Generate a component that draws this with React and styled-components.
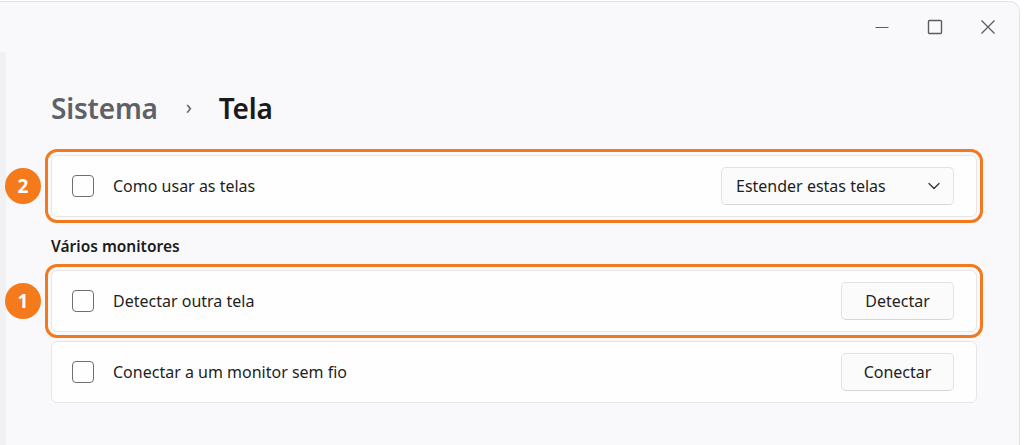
import React from 'react'
import styled, { createGlobalStyle } from 'styled-components'

const GlobalStyle = createGlobalStyle`
    html, body {
        margin: 0;
        padding: 0;
        background: #ffffff;
    }
    body {
        font-family: "Noto Sans", "Open Sans", sans-serif;
        color: #1b1b1b;
    }
`

const Window = styled.div`
    width: 1020px;
    height: 445px;
    box-sizing: border-box;
    margin-top: 1px;
    background: #f9f9fb;
    border-top: 1px solid #e4e4e8;
    border-right: 1px solid #e4e4e8;
    border-top-right-radius: 10px;
    display: flex;
    flex-direction: column;
    overflow: hidden;
`

const TitleBar = styled.div`
    height: 50px;
    display: flex;
    justify-content: flex-end;
    align-items: center;
    padding-right: 5px;
    flex-shrink: 0;
`

const WinButton = styled.div`
    width: 53px;
    height: 36px;
    display: flex;
    align-items: center;
    justify-content: center;
    color: #5c5c60;
`

const Body = styled.div`
    flex: 1;
    display: flex;
`

const Rail = styled.div`
    width: 6px;
    background: #f1f1f3;
    flex-shrink: 0;
`

const Main = styled.main`
    flex: 1;
    padding: 36px 42px 0 45px;
    display: flex;
    flex-direction: column;
`

const Breadcrumb = styled.h1`
    margin: 0;
    height: 40px;
    display: flex;
    align-items: center;
    font-size: 28px;
    font-weight: 600;
    letter-spacing: -0.2px;
`

const Crumb = styled.span`
    color: ${props => props.current ? '#1a1a1a' : '#606066'};
`

const Chevron = styled.span`
    color: #606066;
    font-size: 20px;
    font-weight: 400;
    margin: 0 27px 4px 28px;
`

const Section = styled.h2`
    margin: 19px 0 14px;
    height: 20px;
    line-height: 20px;
    font-size: 15.5px;
    font-weight: 600;
    color: #1c1c1c;
`

const Card = styled.div`
    position: relative;
    height: 62px;
    box-sizing: border-box;
    margin-top: ${props => props.top || 0}px;
    background: #fefefe;
    border: 1px solid #e6e6e8;
    border-radius: 6px;
    display: flex;
    align-items: center;
    padding: 0 22px 0 20px;
    outline: ${props => props.marked ? '3px solid #f3791e' : 'none'};
    outline-offset: 3px;
`

const Box = styled.span`
    width: 20px;
    height: 20px;
    border: 1.5px solid #707074;
    border-radius: 4px;
    flex-shrink: 0;
`

const Label = styled.span`
    flex: 1;
    margin-left: 19px;
    font-size: 16px;
    color: #1e1e1e;
`

const Button = styled.button`
    height: 38px;
    width: ${props => props.wide ? 233 : 113}px;
    box-sizing: border-box;
    background: #fbfbfb;
    border: 1px solid #e2e2e4;
    border-bottom-color: #d6d6d8;
    border-radius: 5px;
    font-family: inherit;
    font-size: 16px;
    color: #1e1e1e;
    display: flex;
    align-items: center;
    justify-content: ${props => props.wide ? 'space-between' : 'center'};
    padding: ${props => props.wide ? '0 12px 0 14px' : '0'};
`

const Badge = styled.span`
    position: absolute;
    left: -47px;
    top: 50%;
    transform: translateY(-50%);
    width: 36px;
    height: 36px;
    border-radius: 50%;
    background: #f47a1c;
    color: #ffffff;
    font-size: 19px;
    font-weight: 700;
    display: flex;
    align-items: center;
    justify-content: center;
`

const Minimize = () => (
    <svg width="16" height="16" viewBox="0 0 16 16"><path d="M1.5 8.5h13" stroke="currentColor" strokeWidth="1.2" /></svg>
)
const Maximize = () => (
    <svg width="16" height="16" viewBox="0 0 16 16"><rect x="1.5" y="1.5" width="13" height="13" rx="1" fill="none" stroke="currentColor" strokeWidth="1.4" /></svg>
)
const Close = () => (
    <svg width="16" height="16" viewBox="0 0 16 16"><path d="M1.5 1.5l13 13M14.5 1.5l-13 13" stroke="currentColor" strokeWidth="1.3" /></svg>
)
const Down = () => (
    <svg width="14" height="14" viewBox="0 0 14 14"><path d="M2 4.5l5 5 5-5" fill="none" stroke="#333" strokeWidth="1.3" strokeLinecap="round" strokeLinejoin="round" /></svg>
)

function Row({ label, marked, badge, top, children }) {
    return (
        <Card marked={marked} top={top}>
            {badge && <Badge>{badge}</Badge>}
            <Box />
            <Label>{label}</Label>
            {children}
        </Card>
    )
}

export default function App() {
    return (
        <>
            <GlobalStyle />
            <Window>
                <TitleBar>
                    <WinButton><Minimize /></WinButton>
                    <WinButton><Maximize /></WinButton>
                    <WinButton><Close /></WinButton>
                </TitleBar>
                <Body>
                    <Rail />
                    <Main>
                        <Breadcrumb>
                            <Crumb>Sistema</Crumb>
                            <Chevron>›</Chevron>
                            <Crumb current>Tela</Crumb>
                        </Breadcrumb>
                        <Row label="Como usar as telas" marked badge="2" top={27}>
                            <Button wide>Estender estas telas<Down /></Button>
                        </Row>
                        <Section>Vários monitores</Section>
                        <Row label="Detectar outra tela" marked badge="1">
                            <Button>Detectar</Button>
                        </Row>
                        <Row label="Conectar a um monitor sem fio" top={9}>
                            <Button>Conectar</Button>
                        </Row>
                    </Main>
                </Body>
            </Window>
        </>
    )
}
